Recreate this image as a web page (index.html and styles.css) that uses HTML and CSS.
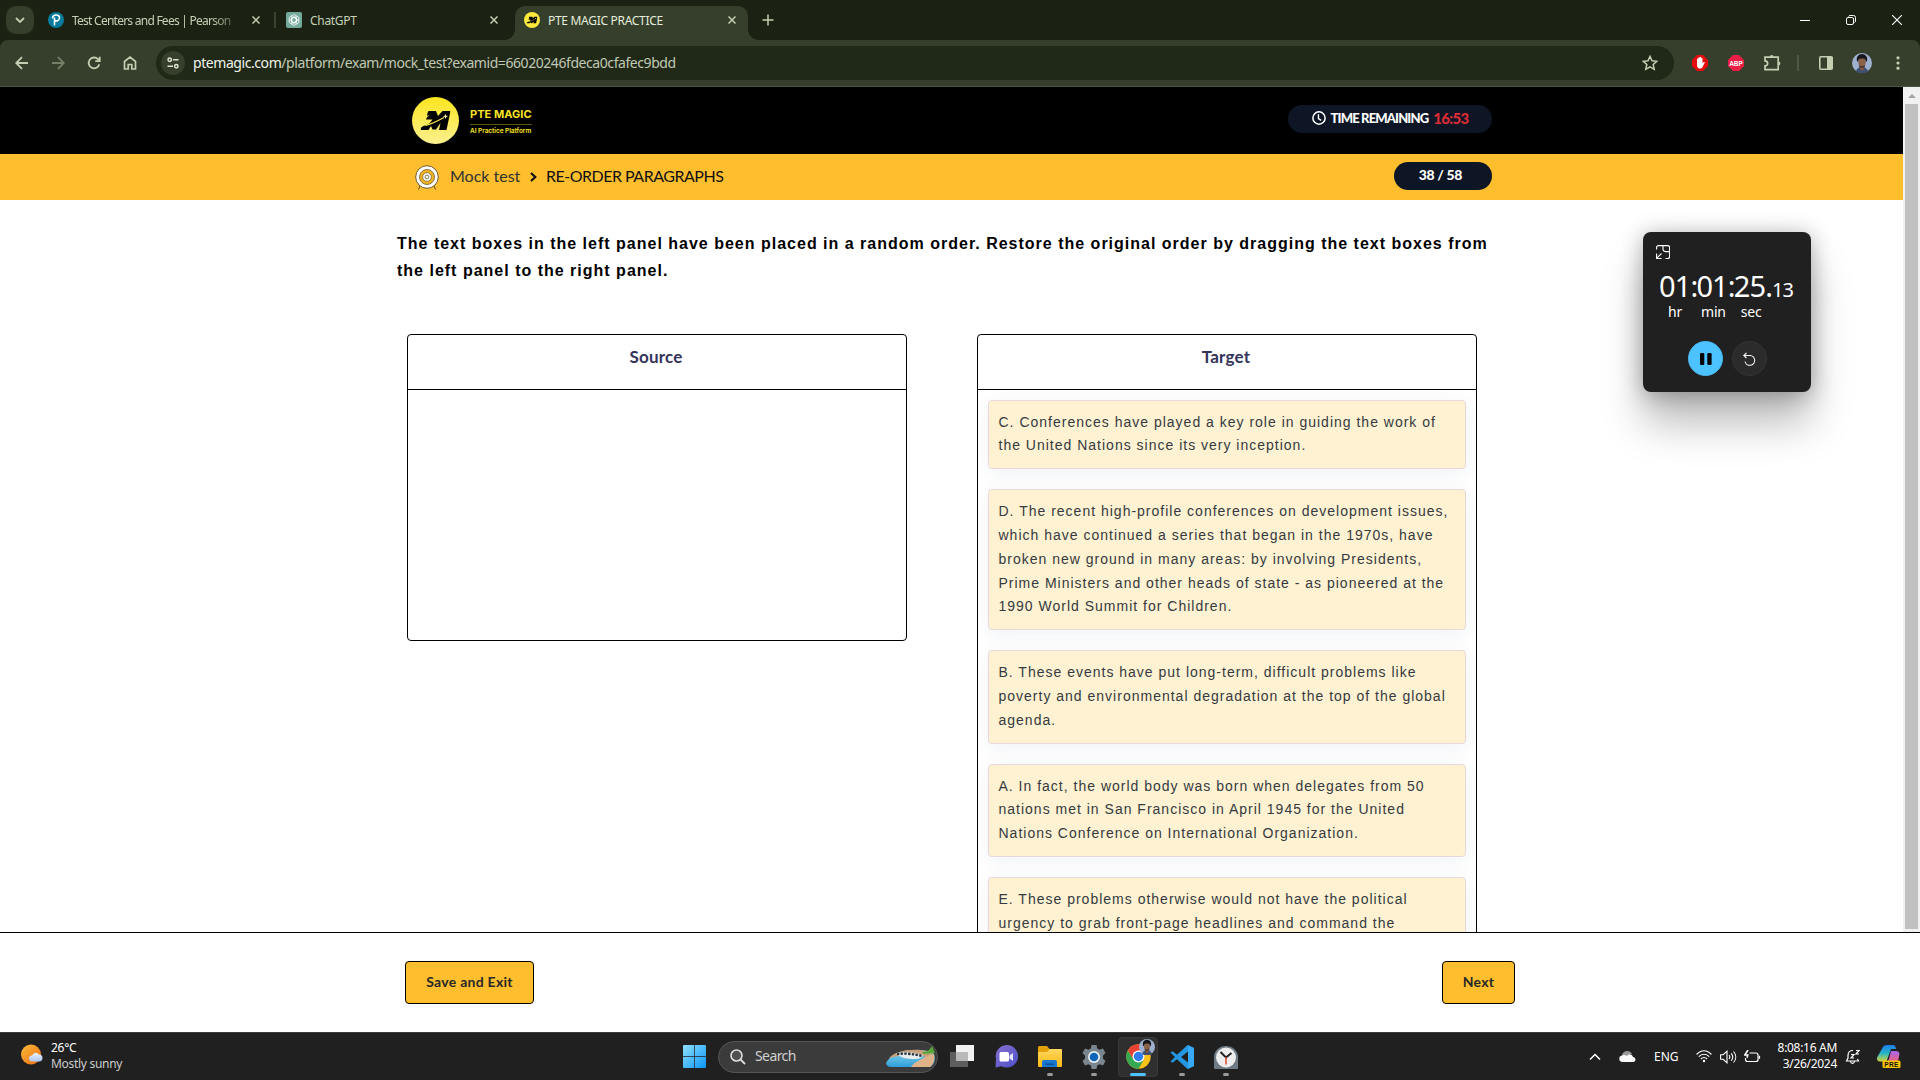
FILE: index.html
```html
<!DOCTYPE html>
<html lang="en">
<head>
<meta charset="utf-8">
<title>PTE MAGIC PRACTICE</title>
<link rel="stylesheet" href="styles.css">
</head>
<body>
<svg class="defs" width="0" height="0" aria-hidden="true">
  <defs>
    <linearGradient id="gold" x1="0" y1="0" x2="0" y2="1"><stop offset="0" stop-color="#fde51f"/><stop offset="1" stop-color="#fbf08f"/></linearGradient>
    <linearGradient id="win" x1="0" y1="0" x2="1" y2="1"><stop offset="0" stop-color="#8fe0ff"/><stop offset="1" stop-color="#0a95f5"/></linearGradient>
    <linearGradient id="sun" x1="0" y1="0" x2="1" y2="1"><stop offset="0" stop-color="#f7bd3a"/><stop offset="1" stop-color="#ef6b12"/></linearGradient>
    <linearGradient id="cloud" x1="0" y1="0" x2="0" y2="1"><stop offset="0" stop-color="#eef3fd"/><stop offset="1" stop-color="#a9c4f2"/></linearGradient>
    <linearGradient id="chat" x1="0" y1="0" x2="1" y2="1"><stop offset="0" stop-color="#8a6fd0"/><stop offset="1" stop-color="#4a50c8"/></linearGradient>
    <linearGradient id="folder" x1="0" y1="0" x2="0" y2="1"><stop offset="0" stop-color="#ffd75e"/><stop offset="1" stop-color="#fdb913"/></linearGradient>
    <linearGradient id="water" x1="0" y1="0" x2="0" y2="1"><stop offset="0" stop-color="#8fd6e8"/><stop offset="1" stop-color="#2d9fdc"/></linearGradient>
    <linearGradient id="cpA" x1="0" y1="0" x2="0" y2="1"><stop offset="0" stop-color="#1b7df0"/><stop offset=".5" stop-color="#27b6c4"/><stop offset="1" stop-color="#d7d43a"/></linearGradient>
    <linearGradient id="cpB" x1="0" y1="0" x2="0" y2="1"><stop offset="0" stop-color="#a667ea"/><stop offset="1" stop-color="#f0627a"/></linearGradient>
    <symbol id="m-mark" viewBox="0 0 30 19">
      <path d="M8 0h7.500l2 5 4.500-5h8l-4 19h-7.500l1.500-7-4.500 6.500h-3.500l-1.500-3.500-2.500 4H0q0-3 3-4 6-1.500 9-6.500H5.500q.5-3 3.500-4H6.500Q7 1 8 0z"/>
      <path d="M5 14.500C11 13 18 9.500 23.500 6.500" fill="none" stroke="#fbe94f" stroke-width="1.100"/>
      <path d="M25 3l.8 1.700 1.800.6-1.800.7L25 8l-.8-2-1.800-.7 1.800-.6z" fill="#fbf3a0"/>
    </symbol>
    <symbol id="face" viewBox="0 0 20 20">
      <circle cx="10" cy="10" r="10" fill="#9fb0cf"/>
      <path d="M4 19c0-3 3-5 6-5s6 2 6 5c-3 1.500-9 1.500-12 0z" fill="#3d4f70"/>
      <path d="M8 13h4v3l-2 2-2-2z" fill="#80573e"/>
      <ellipse cx="10" cy="9.500" rx="3.700" ry="5" fill="#8a6247"/>
      <path d="M5 8c-1-4 1.500-7 5-7s6 3 5 7l-1.200 1c0-3-1.600-3.500-3.800-3.500S6.200 6 6.200 9z" fill="#17171b"/>
      <path d="M7.300 12c1 1.800 4.400 1.800 5.400 0v2.500h-5.400z" fill="#3a2a22"/>
    </symbol>
  </defs>
</svg>

<header class="browser">
  <div class="tabstrip">
    <button class="tab-search"><svg width="10" height="6" viewBox="0 0 10 6"><path d="M1 1l4 4 4-4" class="st" stroke-width="1.800"/></svg></button>
    <div class="tab tab-a">
      <svg width="16" height="16" viewBox="0 0 16 16"><circle cx="8" cy="8" r="8" fill="#047a9c"/><path d="M6.500 13.500V5.500M4.500 6.500C4.500 2 11.800 2 11.500 6c-.2 3-3.500 3.500-4.500 2.200" fill="none" stroke="#fff" stroke-width="1.600"/></svg>
      <span class="tab-title fade">Test Centers and Fees | Pearson</span>
      <svg class="x" width="8" height="8" viewBox="0 0 8 8"><path d="M.5.500l7 7m0-7l-7 7" class="st" stroke-width="1.500"/></svg>
    </div>
    <i class="tab-sep"></i>
    <div class="tab tab-b">
      <svg width="16" height="16" viewBox="0 0 16 16"><rect width="16" height="16" rx="2" fill="#74aa9c"/><g fill="none" stroke="#fff" stroke-width=".8"><path id="petal" d="M8 5.200L5.700 6.600v4.200M8 5.200l3.600 2.100M5.600 4.800a2.600 2.600 0 0 1 4.900-.6"/><use href="#petal" transform="rotate(60 8 8)"/><use href="#petal" transform="rotate(120 8 8)"/><use href="#petal" transform="rotate(180 8 8)"/><use href="#petal" transform="rotate(240 8 8)"/><use href="#petal" transform="rotate(300 8 8)"/></g></svg>
      <span class="tab-title">ChatGPT</span>
      <svg class="x" width="8" height="8" viewBox="0 0 8 8"><path d="M.5.500l7 7m0-7l-7 7" class="st" stroke-width="1.500"/></svg>
    </div>
    <div class="tab tab-c">
      <svg width="16" height="16" viewBox="0 0 16 16"><circle cx="8" cy="8" r="8" fill="#fbe83c"/><use href="#m-mark" x="2.500" y="4.500" width="11" height="7"/></svg>
      <span class="tab-title">PTE MAGIC PRACTICE</span>
      <svg class="x" width="8" height="8" viewBox="0 0 8 8"><path d="M.5.500l7 7m0-7l-7 7" class="st" stroke-width="1.500"/></svg>
    </div>
    <svg class="plus" width="12" height="12" viewBox="0 0 12 12"><path d="M6 .5v11M.5 6h11" class="st" stroke-width="1.500"/></svg>
    <div class="window-buttons">
      <svg width="10" height="10" viewBox="0 0 10 10"><path d="M0 5.500h10" stroke="#fff"/></svg>
      <svg width="10" height="10" viewBox="0 0 10 10"><rect x=".5" y="2.500" width="7" height="7" rx="1.500" fill="none" stroke="#fff"/><path d="M2.500 1.500Q3 .5 4 .5h3.500q2 0 2 2V6q0 1-1 1.500" fill="none" stroke="#fff"/></svg>
      <svg width="10" height="10" viewBox="0 0 10 10"><path d="M0 0l10 10M10 0L0 10" stroke="#fff" stroke-width="1.100"/></svg>
    </div>
  </div>
  <div class="toolbar">
    <div class="nav">
      <svg width="14" height="14" viewBox="0 0 14 14"><path d="M13 7H1.500M7 1.200L1.200 7 7 12.800" class="st" stroke-width="1.800"/></svg>
      <svg class="dim" width="14" height="14" viewBox="0 0 14 14"><path d="M1 7h11.500M7 1.200L12.800 7 7 12.800" class="st" stroke-width="1.800"/></svg>
      <svg width="14" height="14" viewBox="0 0 14 14"><path d="M12.300 8.200A5.400 5.400 0 1 1 11 3.200L12.500 5M12.700.8V5.200H8.300" class="st" stroke-width="1.800"/></svg>
      <svg width="14" height="14" viewBox="0 0 14 14"><path d="M1.500 13V5.500L7 1.200l5.500 4.300V13H8.800V8.500H5.200V13z" class="st" stroke-width="1.700"/></svg>
    </div>
    <div class="omnibox">
      <span class="site-info"><svg width="12" height="12" viewBox="0 0 12 12"><g fill="none" stroke="#dfe5d5" stroke-width="1.500"><circle cx="2.700" cy="2.700" r="1.700"/><path d="M6 2.700h5.500M.5 9.300H6"/><circle cx="9.300" cy="9.300" r="1.700"/></g></svg></span>
      <span class="url"><b>ptemagic.com</b>/platform/exam/mock_test?examid=66020246fdeca0cfafec9bdd</span>
      <svg class="star" width="16" height="16" viewBox="0 0 16 16"><path d="M8 1.400l2 4.400 4.800.5-3.600 3.200 1 4.800L8 11.800l-4.200 2.500 1-4.800L1.200 6.300 6 5.800z" class="st" stroke-width="1.500"/></svg>
    </div>
    <div class="extensions">
      <svg width="16" height="16" viewBox="0 0 16 16"><path d="M5 0h6l5 5v6l-5 5H5l-5-5V5z" fill="#e40d0d"/><path d="M5 8.500V4.200c0-.9 1.300-.9 1.300 0V3c0-1 1.400-1 1.400 0v-.5c0-1 1.400-1 1.400 0V3.500c0-1 1.400-1 1.400 0v5l1-1.300c.7-.6 1.500 0 1.100.7L10.500 12c-1 2-4 2-4.800.5C5.200 11.500 5 10.500 5 8.500z" fill="#fff"/></svg>
      <svg width="16" height="16" viewBox="0 0 16 16"><path d="M5 0h6l5 5v6l-5 5H5l-5-5V5z" fill="#ed1e45"/><text x="8" y="10.700" class="abp">ABP</text></svg>
      <svg width="18" height="18" viewBox="0 0 18 18"><path d="M2 3.200h13.200v4h0v8.400H2v-3.700c3.500-.3 3.500-4.700 0-5z" class="st" stroke-width="1.700"/><path d="M6.800 3a1.900 1.900 0 0 1 3.800 0zM15.500 7.500a1.900 1.900 0 0 1 0 3.800z" fill="#c3cfb0"/></svg>
      <i class="bar"></i>
      <svg width="14" height="14" viewBox="0 0 14 14"><rect x=".8" y=".8" width="12.400" height="12.400" rx="1" class="st" stroke-width="1.600"/><path d="M8 1h5.500v12H8z" fill="#c3cfb0"/></svg>
      <svg width="20" height="20"><use href="#face" width="20" height="20"/></svg>
      <svg width="4" height="14" viewBox="0 0 4 14" fill="#c3cfb0"><circle cx="2" cy="1.800" r="1.600"/><circle cx="2" cy="7" r="1.600"/><circle cx="2" cy="12.200" r="1.600"/></svg>
    </div>
  </div>
</header>

<div class="viewport">
  <div class="page">
    <div class="masthead">
      <svg width="47" height="47" viewBox="0 0 47 47"><circle cx="23.500" cy="23.500" r="23.500" fill="url(#gold)"/><use href="#m-mark" x="8.500" y="14" width="30" height="19"/></svg>
      <div class="brand"><strong>PTE MAGIC</strong><span>AI Practice Platform</span></div>
      <div class="timer">
        <svg width="14" height="14" viewBox="0 0 13 13"><circle cx="6.500" cy="6.500" r="5.700" fill="none" stroke="#fff" stroke-width="1.400"/><path d="M6 3v4l2.500 1.700" fill="none" stroke="#fff" stroke-width="1.300"/></svg>
        <span>TIME REMAINING</span><em>16:53</em>
      </div>
    </div>
    <div class="crumbs">
      <svg width="24" height="25" viewBox="0 0 24 25"><path d="M5 21l-1.500 3.500M19 21l1.500 3.500" stroke="#5d4a1c"/><circle cx="12" cy="12" r="11.300" fill="#fff" stroke="#6b5930" stroke-width="1"/><circle cx="12" cy="12" r="7.500" fill="#f0b41f" stroke="#6b5930" stroke-width=".8"/><circle cx="12" cy="12" r="4.300" fill="#fff" stroke="#6b5930" stroke-width=".7"/><circle cx="12" cy="12" r="1.900" fill="#fff" stroke="#6b5930" stroke-width=".8"/></svg>
      <span class="crumb-parent">Mock test</span>
      <svg class="crumb-arrow" width="7" height="10" viewBox="0 0 7 10"><path d="M1 1l4.300 4L1 9" fill="none" stroke="#111" stroke-width="2.200"/></svg>
      <span class="crumb-here">RE-ORDER PARAGRAPHS</span>
      <span class="progress">38 / 58</span>
    </div>
    <main class="exam">
      <p class="instruction">The text boxes in the left panel have been placed in a random order. Restore the original order by dragging the text boxes from the left panel to the right panel.</p>
      <div class="panels">
        <section class="panel source"><h2>Source</h2></section>
        <section class="panel target">
          <h2>Target</h2>
          <ul>
            <li>C. Conferences have played a key role in guiding the work of the United Nations since its very inception.</li>
            <li>D. The recent high-profile conferences on development issues, which have continued a series that began in the 1970s, have broken new ground in many areas: by involving Presidents, Prime Ministers and other heads of state - as pioneered at the 1990 World Summit for Children.</li>
            <li>B. These events have put long-term, difficult problems like poverty and environmental degradation at the top of the global agenda.</li>
            <li>A. In fact, the world body was born when delegates from 50 nations met in San Francisco in April 1945 for the United Nations Conference on International Organization.</li>
            <li>E. These problems otherwise would not have the political urgency to grab front-page headlines and command the</li>
          </ul>
        </section>
      </div>
    </main>
  </div>
  <div class="scrollbar"><i class="arrow"></i><i class="thumb"></i></div>
</div>
<footer class="actions">
  <button class="btn save">Save and Exit</button>
  <button class="btn next">Next</button>
</footer>

<div class="taskbar">
  <div class="weather">
    <svg width="22" height="22" viewBox="0 0 22 22"><circle cx="10" cy="10.500" r="10" fill="url(#sun)"/><path d="M11 17.500a3 3 0 0 1 0-6 4 4 0 0 1 7-1 3.500 3.500 0 0 1 0 7z" fill="url(#cloud)"/></svg>
    <div><span>26°C</span><small>Mostly sunny</small></div>
  </div>
  <div class="apps">
    <svg class="app start" width="23" height="23" viewBox="0 0 23 23" fill="url(#win)"><path d="M1 0h10.200v11.200H0V1a1 1 0 0 1 1-1zM11.900 0H22a1 1 0 0 1 1 1v10.200H11.900zM0 11.900h11.200V23H1a1 1 0 0 1-1-1zM11.900 11.900H23V22a1 1 0 0 1-1 1H11.900z"/></svg>
    <div class="search">
      <svg width="16" height="16" viewBox="0 0 16 16"><circle cx="6.500" cy="6.500" r="5.500" fill="#505050" stroke="#ddd" stroke-width="1.600"/><path d="M10.500 10.500L15 15" stroke="#ddd" stroke-width="1.800"/></svg>
      <span>Search</span>
      <svg class="beach" width="51" height="22" viewBox="0 0 51 22"><path d="M1 17C5 9 16 4 26 4s20 0 23 4c2 6 0 11-4 13H6c-3 0-5-2-5-4z" fill="url(#water)"/><path d="M4 12C10 6 20 3 36 4l12 3-5 5c-6-3-24-4-39 0z" fill="#c5a07a"/><path d="M38 6c5 0 7-3 9-6l3 7-12 1z" fill="#58a93a"/><path d="M26 21c3-5 11-8 19-12l4-1c1 7-1 11-4 13z" fill="#e0b489"/><path d="M11 7c10-2 22 0 27 2-2 3-4 4-8 4-8 0-15-1-19-6z" fill="#e8eeee"/><path d="M12 8c8-1 18 0 25 2" fill="none" stroke="#26313c" stroke-width="2.400" stroke-dasharray="2.400 1.300"/></svg>
    </div>
    <div class="app"><svg width="24" height="23" viewBox="0 0 24 23"><path d="M6 0h18v16H6z" fill="#f1f1f1"/><path d="M0 7h18v15H0z" fill="#5e5e5e"/><path d="M6 7h12v9H6z" fill="#b9b9b9"/></svg></div>
    <div class="app"><svg width="23" height="23" viewBox="0 0 23 23"><path d="M11.500 0a11.300 11.300 0 1 1-5 21.300L.5 22.500 1 14A11.300 11.300 0 0 1 11.500 0z" fill="url(#chat)"/><rect x="4.500" y="7" width="9.500" height="9.500" rx="1.500" fill="#fff"/><path d="M14.500 10.500l3.500-2.500v8l-3.500-2.500z" fill="#e6e6fb"/></svg></div>
    <div class="app"><svg width="24" height="22" viewBox="0 0 24 22"><path d="M1 0h8l2.500 3H23v6H0V1z" fill="#e2a00b"/><path d="M0 6h9l2.500-3H23a1 1 0 0 1 1 1v16a1 1 0 0 1-1 1H1a1 1 0 0 1-1-1z" fill="url(#folder)"/><path d="M4 21v-5q0-2 2-2h11q2 0 2 2v5z" fill="#1679cf"/><path d="M7 17.500h9V19H7z" fill="#0b4f95"/></svg><i class="dot"></i></div>
    <div class="app"><svg width="24" height="24" viewBox="0 0 24 24"><path d="M9.500 0h5l.7 3.500 2.300 1.300L21 3.600l2.500 4.300L21 10.500v3l2.500 2.600-2.500 4.300-3.500-1.200-2.300 1.300-.7 3.500h-5l-.7-3.500-2.300-1.300L3 20.400.5 16.100 3 13.500v-3L.5 7.900 3 3.600l3.500 1.200 2.300-1.300z" fill="#7a868f"/><circle cx="12" cy="12" r="6" fill="#e9eef2"/><circle cx="12" cy="12" r="4.300" fill="#0f66b8"/></svg><i class="dot"></i></div>
    <div class="app current"><svg width="25" height="25" viewBox="0 0 25 25"><circle cx="12.500" cy="12.500" r="12.200" fill="#fbc116"/><path d="M1.900 6.400A12.200 12.200 0 0 1 23.100 6.400H12.500L7 15.500z" fill="#ea4335"/><path d="M1.900 6.400A12.200 12.200 0 0 0 12.500 24.700L18 15.500H7.300z" fill="#34a853"/><circle cx="12.500" cy="12.500" r="6" fill="#fff"/><circle cx="12.500" cy="12.500" r="4.700" fill="#2f7df0"/></svg><svg class="badge" width="16" height="16"><use href="#face" width="16" height="16"/></svg><i class="dot"></i></div>
    <div class="app"><svg width="24" height="24" viewBox="0 0 24 24"><path d="M17.500 0L24 3v18l-6.500 3L7 14.200 2.500 17.700.5 16.500 5 12 .5 7.500l2-1.200L7 9.800zM18 6.500L11 12l7 5.500z" fill="#2497e3" fill-rule="evenodd"/><path d="M17.500 0L24 3v18l-6.500 3q.5-.5.5-1.500v-21q0-1-.5-1.500z" fill="#38a9f4"/></svg><i class="dot"></i></div>
    <div class="app"><svg width="24" height="24" viewBox="0 0 24 24"><path d="M0 12A12 11 0 0 1 24 12v11q0 1-1 1H1q-1 0-1-1z" fill="#6e7a84"/><circle cx="12" cy="12.500" r="10" fill="#ededed"/><path d="M6.500 7l5.500 5.500L17.500 8" fill="none" stroke="#222" stroke-width="2"/><path d="M12 12v7.500" stroke="#d9442b" stroke-width="1.500"/></svg><i class="dot"></i></div>
  </div>
  <div class="tray">
    <svg width="12" height="8" viewBox="0 0 12 8"><path d="M1 6.500l5-5 5 5" fill="none" stroke="#fff" stroke-width="1.500"/></svg>
    <svg class="onedrive" width="17" height="11" viewBox="0 0 17 11"><path d="M3 7C2 3 5 0 8 0c3 0 4 1.500 5 3z" fill="#9a9a9a"/><path d="M3 11a3.300 3.300 0 0 1 0-6.500c1.500-1 3.500-.5 5 .5 1.500-2 5-2 6 1 3.500.5 3 5 0 5z" fill="#fafafa"/></svg>
    <span class="lang">ENG</span>
    <svg width="16" height="13" viewBox="0 0 16 13" fill="none" stroke="#fff" stroke-width="1.200"><path d="M.6 4.500C5-.5 11-.5 15.400 4.500M2.800 6.700c3-3.300 7.400-3.300 10.400 0M5 9c1.800-2 4.200-2 6 0"/><circle cx="8" cy="11" r="1.200" fill="#fff" stroke="none"/></svg>
    <svg width="17" height="14" viewBox="0 0 17 14" fill="none" stroke="#fff" stroke-width="1.100"><path d="M.6 4.700h2.600L7 1.200v11.600L3.200 9.300H.6z"/><path d="M9 5c1 1.200 1 2.800 0 4M11.200 3.300c2 2.300 2 5.100 0 7.400M13.500 1.500c3 3.300 3 7.700 0 11"/></svg>
    <svg width="17" height="13" viewBox="0 0 17 13" fill="none" stroke="#fff" stroke-width="1.200"><path d="M5.500 3H12q2 0 2 2v4.500q0 2-2 2H3.500q-2 0-2-2V8M15.500 5.800v3"/><path d="M4 0L.8 5h3L3 7.800" stroke-width="1.500"/></svg>
    <div class="clock"><span>8:08:16 AM</span><span>3/26/2024</span></div>
    <svg class="bell" width="16" height="16" viewBox="0 0 16 16"><path d="M8 1.500C4.500 1.500 3 4 3 6.500V9l-1.500 3h12L12.500 10M5.500 12.500c.5 2.500 3.500 2.500 4 0M6 5.500h3l-3 3.500h3M11 1.500h3l-3 3.500h3" fill="none" stroke="#fff" stroke-width="1.200"/></svg>
    <svg width="24" height="24" viewBox="0 0 24 24"><path d="M6 2q1-2 4-2h6q2 0 2.500 2l.5 2h-5l-4 11q-.5 1.500-2.500 1.500H3q-3.500 0-3-4z" fill="url(#cpA)"/><path d="M14 6h5.500q3.500.5 2.800 4l-1.500 7H9q2 0 3-3z" fill="url(#cpB)"/><rect x="5.500" y="15.500" width="18" height="7.500" rx="1.500" fill="#fdc501"/><text x="14.500" y="21.800" class="pre">PRE</text></svg>
  </div>
</div>

<aside class="stopwatch">
  <svg class="compact" width="14" height="14" viewBox="0 0 14 14" fill="none" stroke="#fff" stroke-width="1.100"><path d="M.6 4.500V2.600q0-2 2-2h9q2 0 2 2v9q0 2-2 2H9.500M.6 8.500v5h5M.8 13.200L5.500 8.500M7 .6v3.500q0 2.500 2.500 2.500h4"/></svg>
  <div class="digits">01<i>:</i>01<i>:</i>25<span>.<small>13</small></span></div>
  <div class="units"><span>hr</span><span>min</span><span>sec</span></div>
  <div class="controls">
    <button class="round pause"><svg width="12" height="12" viewBox="0 0 12 12"><rect x="0" y="0" width="4.300" height="12" rx="1.300"/><rect x="7.300" y="0" width="4.300" height="12" rx="1.300"/></svg></button>
    <button class="round"><svg width="13" height="14" viewBox="0 0 13 14" fill="none" stroke="#fff" stroke-width="1.100"><path d="M3.500.8L.8 3.500l2.700 2.700M.8 3.500h6.200a4.900 4.900 0 1 1-5 6"/></svg></button>
  </div>
</aside>
</body>
</html>
```
FILE: styles.css
```css
* { box-sizing: border-box; }
body {
  margin: 0;
  width: 1920px;
  height: 1080px;
  overflow: hidden;
  position: relative;
  display: flex;
  flex-direction: column;
  background: #fff;
  font-family: "Liberation Sans", Arial, sans-serif;
}
svg { display: block; flex: none; }
button { font: inherit; padding: 0; border: 0; }
.defs { position: absolute; }
.st { fill: none; stroke: #c3cfb0; }

/* browser frame */
.browser { height: 87px; flex: none; background: #1b2213; font-family: "Noto Sans", "Open Sans", sans-serif; color: #c6d1b6; }
.tabstrip { height: 40px; display: flex; align-items: center; padding-left: 6px; }
.tab-search { width: 28px; height: 28px; border-radius: 10px; background: #353f2b; display: grid; place-items: center; }
.tab { display: flex; align-items: center; gap: 8px; height: 34px; font-size: 12px; }
.tab-title { white-space: nowrap; flex: 1; letter-spacing: -0.3px; }
.tab-a { margin-left: 14px; width: 212px; }
.tab-a .tab-title { letter-spacing: -0.75px; }
.tab-a .x { margin-left: 7px; }
.fade { -webkit-mask-image: linear-gradient(90deg, #000 84%, rgba(0, 0, 0, .25)); mask-image: linear-gradient(90deg, #000 84%, rgba(0, 0, 0, .25)); }
.tab-sep { width: 2px; height: 16px; margin-left: 14px; background: #39432d; }
.tab-b { margin-left: 10px; width: 212px; }
.tab-c { position: relative; align-self: flex-end; margin-left: 17px; width: 233px; padding: 0 12px 6px 9px; border-radius: 10px 10px 0 0; background: #353f2b; height: 34px; color: #e6ecdc; }
.tab-c::before, .tab-c::after { content: ""; position: absolute; bottom: 0; width: 10px; height: 10px; }
.tab-c::before { left: -10px; background: radial-gradient(circle at 0 0, transparent 9.5px, #353f2b 10px); }
.tab-c::after { right: -10px; background: radial-gradient(circle at 100% 0, transparent 9.5px, #353f2b 10px); }
.plus { margin-left: 14px; }
.window-buttons { margin-left: auto; display: flex; gap: 36px; padding-right: 18px; }
.toolbar { height: 47px; display: flex; align-items: center; background: #353f2b; border-bottom: 1px solid #4c5645; border-radius: 8px 8px 0 0; }
.nav { display: flex; gap: 22px; padding-left: 15px; width: 156px; }
.dim { opacity: .45; }
.omnibox { width: 1518px; height: 34px; border-radius: 17px; background: #202818; display: flex; align-items: center; padding: 0 16px 0 5px; }
.site-info { width: 24px; height: 24px; border-radius: 50%; background: #353f2b; display: grid; place-items: center; }
.url { margin-left: 8px; flex: 1; font-size: 14px; line-height: 20px; margin-top: -1px; letter-spacing: -0.43px; color: #c0c9b3; }
.url b { font-weight: 400; color: #f0f4e8; }
.extensions { display: flex; align-items: center; margin-left: 18px; gap: 20px; }
.extensions .bar { width: 2px; height: 16px; margin-left: -4px; background: #4d5942; }
.extensions svg:nth-of-type(5) { margin-left: -1px; }
.extensions svg:nth-of-type(6) { margin-left: 4px; }
.extensions svg:nth-of-type(3) { margin-left: -1px; }
.abp { font: 700 6.5px "Liberation Sans", sans-serif; fill: #fff; text-anchor: middle; }

/* exam page */
.viewport { height: 845px; flex: none; display: flex; overflow: hidden; }
.page { flex: 1; overflow: hidden; }
.masthead, .crumbs { font-family: "Lato", sans-serif; display: flex; align-items: center; padding: 0 411px 0 412px; }
.masthead { height: 67px; background: #000; }
.brand { margin-left: 11px; width: 62px; color: #fbe521; font-family: "Inter", sans-serif; white-space: nowrap; padding-top: 2px; }
.brand strong { display: block; font-size: 11px; line-height: 15px; border-bottom: 1px solid #5c5310; padding-bottom: 2px; letter-spacing: 0.05px; }
.brand span { display: block; font-size: 6.5px; font-weight: 600; line-height: 10px; padding-top: 1px; letter-spacing: -0.05px; }
.timer { margin: -3px 0 0 auto; width: 204px; height: 28px; border-radius: 14px; background: #0e1625; display: flex; align-items: center; justify-content: center; color: #fff; font-weight: 900; font-size: 13px; letter-spacing: -0.85px; line-height: 16px; padding-bottom: 2px; white-space: nowrap; }
.timer span { margin-left: 5px; }
.timer em { margin-left: 5px; font-style: normal; color: #dc2b35; font-size: 15px; letter-spacing: -0.7px; }
.crumbs { height: 46px; background: #ffbe2e; padding-left: 415px; font-size: 16px; line-height: 20px; color: #111; white-space: nowrap; }
.crumb-parent { margin: -2px 0 0 11px; width: 70px; color: #2f3330; }
.crumb-arrow { margin: -1px 9px 0 10px; }
.crumb-here { margin-top: -2px; letter-spacing: -0.5px; }
.progress { margin: -2px 0 0 auto; width: 98px; height: 28px; line-height: 26px; border-radius: 14px; background: #0e1625; color: #fff; font-weight: 900; font-size: 14px; letter-spacing: -0.35px; text-align: center; padding-right: 5px; }
.exam { padding: 30px 0 0 397px; }
.instruction { margin: 0; width: 1110px; font-size: 16px; font-weight: 700; line-height: 27px; letter-spacing: 1px; color: #000; }
.panels { display: flex; align-items: flex-start; gap: 70px; margin: 50px 0 0 10px; }
.panel { width: 500px; border: 1px solid #000; border-radius: 4px; overflow: hidden; }
.source { height: 307px; }
.panel h2 { margin: 0; height: 55px; border-bottom: 1px solid #000; padding: 9px 2px 0 0; line-height: 26px; text-align: center; font-family: "Lato", sans-serif; font-size: 17px; letter-spacing: .2px; color: #33335c; }
.target ul { list-style: none; margin: 0; padding: 9.600px 10px 10px; display: flex; flex-direction: column; gap: 20px; }
.target li { padding: 10px 8px 10px 9.500px; border: 1px solid #e8d8dc; border-radius: 4px; background: #fff2d2; box-shadow: 0 4px 20px rgba(40, 70, 110, .07); font-size: 14px; line-height: 23.8px; letter-spacing: 1px; color: #343a40; }
.scrollbar { width: 17px; background: #f1f1f1; display: flex; flex-direction: column; align-items: center; }
.arrow { margin-top: 7px; border: 4px solid transparent; border-top: 0; border-bottom: 4px solid #a3a3a3; }
.thumb { margin: 6px 0 3px; width: 13px; flex: 1; background: #c1c1c1; }
.actions { height: 100px; flex: none; border-top: 1px solid #000; background: #fff; display: flex; justify-content: space-between; padding: 28px 405px 0; }
.btn { height: 43px; border: 1px solid #000; border-radius: 4px; background: #ffbe2e; font-family: "Lato", sans-serif; font-weight: 700; font-size: 14px; letter-spacing: .28px; padding-bottom: 2px; color: #282828; }
.save { width: 129px; }
.next { width: 73px; }

/* taskbar */
.taskbar { height: 48px; flex: none; display: flex; background: #202020; border-top: 1px solid #3a3a3a; color: #fff; font-family: "Noto Sans", "Open Sans", sans-serif; font-size: 12px; }
.weather { width: 683px; display: flex; align-items: center; gap: 8px; padding: 0 0 1px 21px; line-height: 16px; }
.weather span, .weather small { display: block; font-size: 12px; letter-spacing: -0.3px; }
.weather small { color: #ccc; }
.weather svg { margin-top: -2px; }
.apps { display: flex; align-items: center; }
.search { margin-left: 12px; width: 220px; height: 32px; border: 1px solid #555; border-radius: 16px; background: #3b3b3b; display: flex; align-items: center; padding: 0 1px 0 11px; color: #d0d0d0; font-size: 14px; letter-spacing: -.6px; }
.search span { margin: -2px 0 0 9px; flex: 1; }
.apps div.app { position: relative; width: 40px; height: 40px; margin-left: 4px; border-radius: 4px; display: grid; place-items: center; }
.apps .current { background: #2f2f2f; border: 1px solid #393939; }
.dot { position: absolute; left: 17px; bottom: 1px; width: 6px; height: 3px; border-radius: 2px; background: #9a9a9a; }
.current .dot { left: 11px; bottom: 0; width: 16px; background: #4cc2ff; }
.badge { position: absolute; left: 20px; top: 1px; }
.tray { margin-left: auto; display: flex; align-items: center; padding-right: 19px; }
.onedrive { margin-left: 18px; }
.lang { margin: 0 18px 0 18px; width: 24px; }
.tray .lang + svg { margin-right: 8px; }
.tray .lang + svg + svg { margin-right: 7px; }
.clock { width: 76px; line-height: 16px; text-align: right; letter-spacing: -0.3px; white-space: nowrap; margin-top: -1px; }
.clock span { display: block; }
.bell { margin: 0 16px 0 8px; }
.pre { font: 700 6.5px "Liberation Sans", sans-serif; text-anchor: middle; fill: #111; letter-spacing: .3px; }

/* floating stopwatch */
.stopwatch { position: absolute; left: 1643px; top: 232px; width: 168px; height: 160px; border-radius: 8px; background: #202020; box-shadow: 0 32px 40px rgba(0, 0, 0, .26), 0 2px 22px rgba(0, 0, 0, .3); color: #fff; font-family: "Noto Sans", "Open Sans", sans-serif; }
.compact { margin: 13px 0 0 13px; }
.digits { display: flex; align-items: baseline; height: 36px; margin: 7px 0 0 16px; font-size: 29px; line-height: 40px; letter-spacing: -0.9px; white-space: nowrap; }
.digits i { font-style: normal; width: 6px; }
.digits small { font-size: 20px; }
.units { display: flex; margin-left: 25px; line-height: 20px; font-size: 14px; letter-spacing: -.2px; }
.units span { margin-right: 19px; }
.units span + span { margin-right: 15px; }
.controls { display: flex; gap: 9px; margin: 19px 0 0 45px; }
.round { width: 35px; height: 35px; border-radius: 50%; background: #2b2b2b; border: 1px solid #343434; display: grid; place-items: center; }
.pause { background: #4cc2ff; border-color: #4cb8f0; }
```
